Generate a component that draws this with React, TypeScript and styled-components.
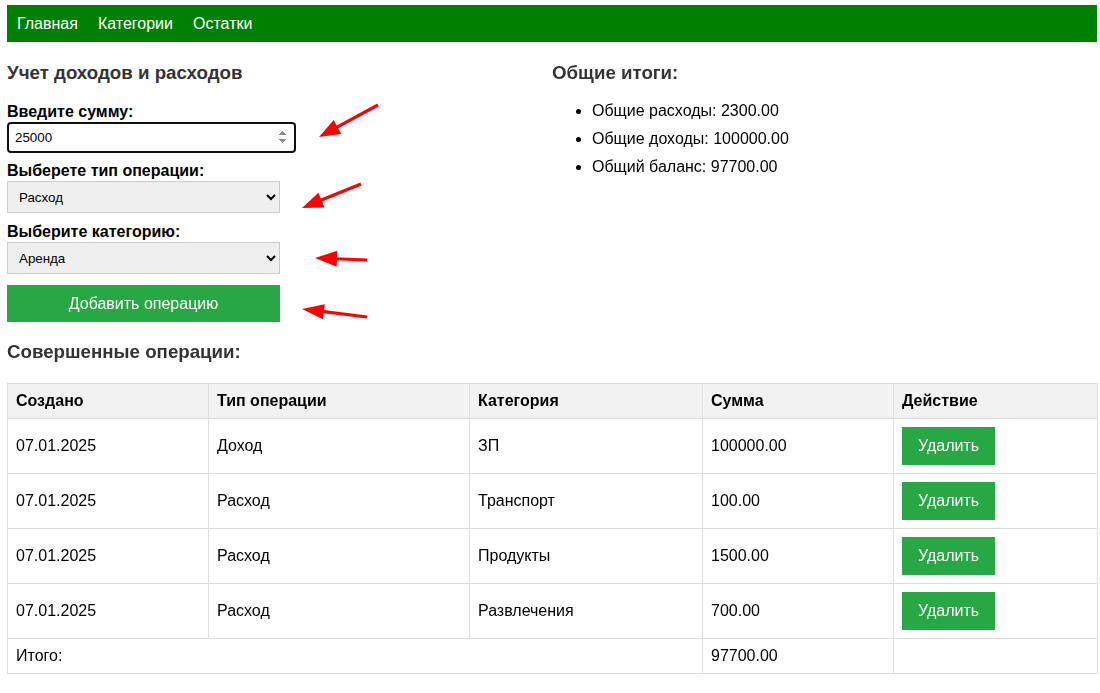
import React from 'react';
import styled, { createGlobalStyle } from 'styled-components';

const GlobalStyle = createGlobalStyle`
  html, body { margin: 0; padding: 0; background: #fff; }
  body {
    font-family: "Liberation Sans", Arial, sans-serif;
    font-size: 16px;
    color: #000;
  }
  * { box-sizing: border-box; }
`;

const Page = styled.div`
  position: relative;
  width: 1100px;
  padding: 5px 3px 0 7px;
`;

const Nav = styled.nav`
  display: flex;
  align-items: center;
  gap: 20px;
  height: 37px;
  padding: 0 10px;
  background: #008000;
`;

const NavLink = styled.a`
  color: #fff;
  text-decoration: none;
  font-size: 16px;
  line-height: 18px;
`;

const Top = styled.div`
  display: grid;
  grid-template-columns: 545px 545px;
`;

const Column = styled.section`
  display: flex;
  flex-direction: column;
  align-items: flex-start;
`;

const Heading = styled.h3<{ $mt?: number; $mb?: number }>`
  margin: ${(p) => p.$mt ?? 20}px 0 ${(p) => p.$mb ?? 19}px;
  font-size: 18.72px;
  line-height: 22px;
  font-weight: bold;
  color: #333;
`;

const Label = styled.label`
  display: block;
  font-weight: bold;
  font-size: 16px;
  line-height: 18px;
  margin-bottom: 1px;
  color: #000;
`;

const NumberInput = styled.input`
  width: 289px;
  height: 31px;
  padding: 0 4px 0 6px;
  margin: 0 0 9px;
  border: 2px solid #101010;
  border-radius: 4px;
  outline: none;
  font-family: "Liberation Sans", Arial, sans-serif;
  font-size: 13.33px;
  color: #000;
  background: #fff;
`;

const Select = styled.select<{ $mb: number }>`
  width: 273px;
  height: 32px;
  padding: 0 7px;
  margin: 0 0 ${(p) => p.$mb}px;
  border: 1px solid #ccc;
  border-radius: 0;
  background-color: #efefef;
  font-family: "Liberation Sans", Arial, sans-serif;
  font-size: 13.33px;
  color: #000;
`;

const AddButton = styled.button`
  width: 273px;
  height: 37px;
  border: none;
  background: #28a745;
  color: #fff;
  font-family: "Liberation Sans", Arial, sans-serif;
  font-size: 16px;
  cursor: pointer;
`;

const TotalsList = styled.ul`
  margin: 18px 0 0;
  padding-left: 40px;
`;

const TotalsItem = styled.li`
  font-size: 16px;
  line-height: 18px;
  margin-bottom: 10px;
`;

const Table = styled.table`
  width: 1090px;
  border-collapse: collapse;
  table-layout: fixed;
  font-size: 16px;
`;

const Col = styled.col<{ $w: number }>`
  width: ${(p) => p.$w}px;
`;

const Th = styled.th`
  text-align: left;
  font-weight: bold;
  padding: 8px;
  line-height: 18px;
  background: #f2f2f2;
  border: 1px solid #ddd;
`;

const Td = styled.td`
  text-align: left;
  padding: 8px;
  line-height: 18px;
  border: 1px solid #ddd;
  vertical-align: middle;
`;

const DeleteButton = styled.button`
  display: block;
  padding: 10px 16px;
  border: none;
  background: #28a745;
  color: #fff;
  font-family: "Liberation Sans", Arial, sans-serif;
  font-size: 16px;
  line-height: 18px;
  cursor: pointer;
`;

const Overlay = styled.svg`
  position: absolute;
  top: 0;
  left: 0;
  width: 1100px;
  height: 693px;
  pointer-events: none;
`;

type Arrow = { x1: number; y1: number; x2: number; y2: number; hl: number; hw: number };

const arrows: Arrow[] = [
  { x1: 378, y1: 105, x2: 319, y2: 137, hl: 21, hw: 8 },
  { x1: 361, y1: 184, x2: 302, y2: 208, hl: 21, hw: 8 },
  { x1: 367, y1: 260, x2: 315, y2: 258, hl: 22, hw: 8 },
  { x1: 367, y1: 317, x2: 302, y2: 309, hl: 22, hw: 7.5 },
];

function ArrowShape({ a }: { a: Arrow }) {
  const dx = a.x2 - a.x1;
  const dy = a.y2 - a.y1;
  const len = Math.hypot(dx, dy);
  const ux = dx / len;
  const uy = dy / len;
  const bx = a.x2 - ux * a.hl;
  const by = a.y2 - uy * a.hl;
  const nx = -uy;
  const ny = ux;
  const pts = `${a.x2},${a.y2} ${bx + nx * a.hw},${by + ny * a.hw} ${bx - nx * a.hw},${by - ny * a.hw}`;
  return (
    <g>
      <line x1={a.x1} y1={a.y1} x2={bx + ux * 2} y2={by + uy * 2} stroke="#ff0000" strokeWidth={3.2} />
      <polygon points={pts} fill="#ff0000" />
    </g>
  );
}

const rows = [
  { date: '07.01.2025', type: 'Доход', cat: 'ЗП', sum: '100000.00' },
  { date: '07.01.2025', type: 'Расход', cat: 'Транспорт', sum: '100.00' },
  { date: '07.01.2025', type: 'Расход', cat: 'Продукты', sum: '1500.00' },
  { date: '07.01.2025', type: 'Расход', cat: 'Развлечения', sum: '700.00' },
];

export default function App() {
  return (
    <Page>
      <GlobalStyle />
      <Nav>
        <NavLink href="#">Главная</NavLink>
        <NavLink href="#">Категории</NavLink>
        <NavLink href="#">Остатки</NavLink>
      </Nav>
      <Top>
        <Column>
          <Heading>Учет доходов и расходов</Heading>
          <Label htmlFor="sum">Введите сумму:</Label>
          <NumberInput id="sum" type="number" defaultValue={25000} autoFocus />
          <Label htmlFor="type">Выберете тип операции:</Label>
          <Select id="type" $mb={10} defaultValue="expense">
            <option value="expense">Расход</option>
            <option value="income">Доход</option>
          </Select>
          <Label htmlFor="cat">Выберите категорию:</Label>
          <Select id="cat" $mb={11} defaultValue="rent">
            <option value="rent">Аренда</option>
            <option value="salary">ЗП</option>
            <option value="transport">Транспорт</option>
            <option value="food">Продукты</option>
            <option value="fun">Развлечения</option>
          </Select>
          <AddButton type="button">Добавить операцию</AddButton>
          <Heading $mt={19} $mb={20}>Совершенные операции:</Heading>
        </Column>
        <Column>
          <Heading $mb={0}>Общие итоги:</Heading>
          <TotalsList>
            <TotalsItem>Общие расходы: 2300.00</TotalsItem>
            <TotalsItem>Общие доходы: 100000.00</TotalsItem>
            <TotalsItem>Общий баланс: 97700.00</TotalsItem>
          </TotalsList>
        </Column>
      </Top>
      <Table>
        <colgroup>
          <Col $w={201} />
          <Col $w={261} />
          <Col $w={233} />
          <Col $w={191} />
          <Col $w={204} />
        </colgroup>
        <thead>
          <tr>
            <Th>Создано</Th>
            <Th>Тип операции</Th>
            <Th>Категория</Th>
            <Th>Сумма</Th>
            <Th>Действие</Th>
          </tr>
        </thead>
        <tbody>
          {rows.map((r, i) => (
            <tr key={i}>
              <Td>{r.date}</Td>
              <Td>{r.type}</Td>
              <Td>{r.cat}</Td>
              <Td>{r.sum}</Td>
              <Td>
                <DeleteButton type="button">Удалить</DeleteButton>
              </Td>
            </tr>
          ))}
          <tr>
            <Td colSpan={3}>Итого:</Td>
            <Td>97700.00</Td>
            <Td />
          </tr>
        </tbody>
      </Table>
      <Overlay viewBox="0 0 1100 693">
        {arrows.map((a, i) => (
          <ArrowShape key={i} a={a} />
        ))}
      </Overlay>
    </Page>
  );
}
